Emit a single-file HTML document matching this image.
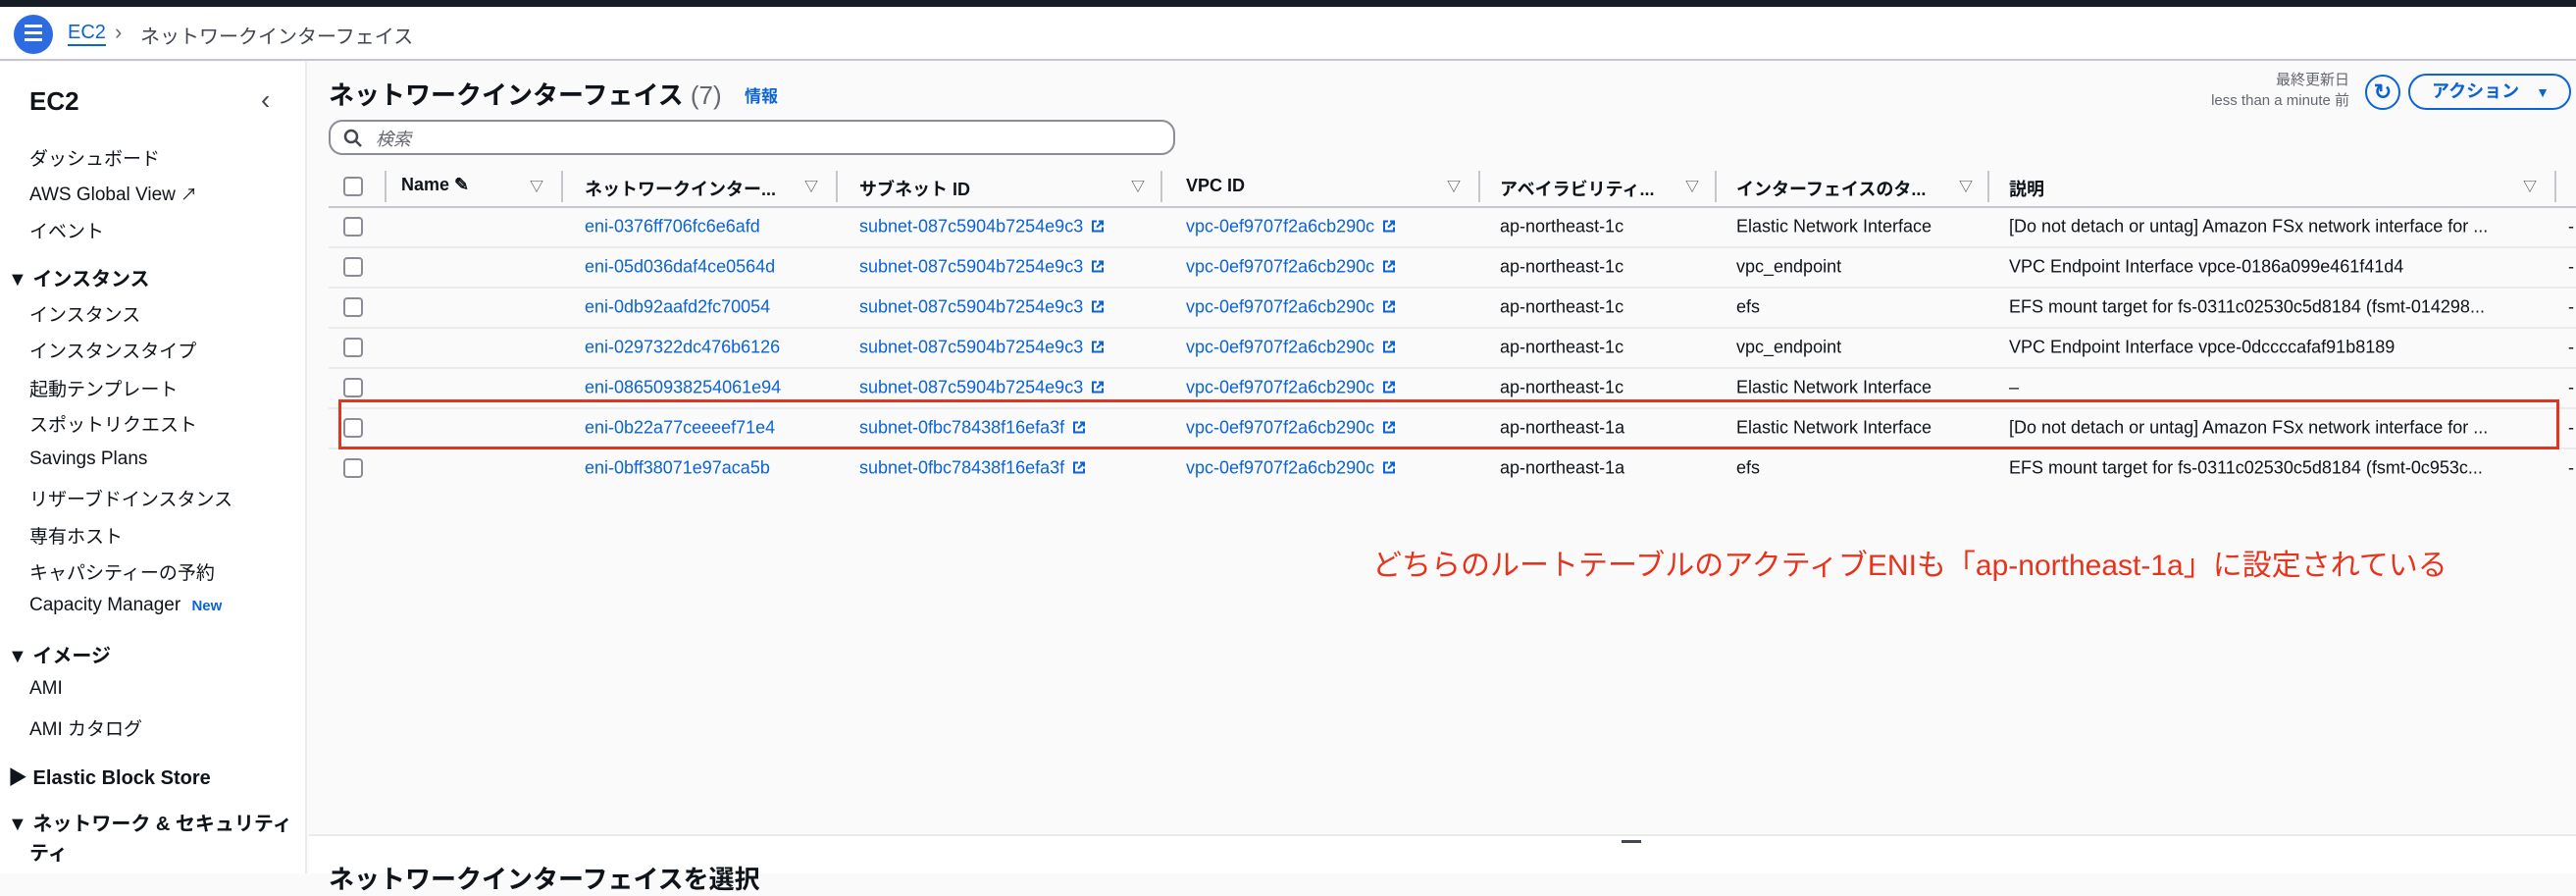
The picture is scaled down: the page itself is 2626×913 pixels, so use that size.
<!DOCTYPE html>
<html><head><meta charset="utf-8"><style>
*{margin:0;padding:0;box-sizing:border-box}
body{width:2626px;height:890px;overflow:hidden;background:#fafafa;font-family:"Liberation Sans","Noto Sans CJK JP",sans-serif;color:#0f141a;position:relative}
.a{position:absolute;white-space:nowrap}
.top{left:0;top:0;width:2626px;height:7px;background:#161d26}
.hdr{left:0;top:7px;width:2626px;height:55px;background:#fff;border-bottom:2px solid #c6c6cd}
.side{left:0;top:63px;width:313px;height:827px;background:#fff;border-right:2px solid #e9ebed}
.s{font-size:19px;left:30px;color:#0f141a}
.sh{font-size:20px;font-weight:bold;left:8px}
.lk{color:#0b63d6}
.t{font-size:18px;transform:translateY(-50%)}
.sep{width:2px;height:32px;background:#c6c6cd;top:174px}
.tri{font-size:14px;top:180px;color:#424650}
.cb{left:350px;width:20px;height:20px;border:2px solid #8c8c94;border-radius:4px;background:#fff}
.row{left:335px;width:2291px;height:2px;background:#e9ebed}
.ext{display:inline-block;width:14px;height:14px;margin-left:8px;vertical-align:-1px}
</style></head><body>
<div class="a top"></div>
<div class="a hdr"></div>
<div class="a" style="left:14px;top:15px;width:40px;height:40px;border-radius:50%;background:#2d6be0"></div>
<div class="a" style="left:25px;top:25px;width:18px;height:3px;background:#fff;box-shadow:0 7px 0 #fff,0 14px 0 #fff"></div>
<div class="a lk" style="left:69px;top:21px;font-size:20px;border-bottom:2px solid #0b63d6;line-height:24px">EC2</div>
<div class="a" style="left:117px;top:20px;font-size:22px;color:#656871">&#x203A;</div>
<div class="a" style="left:143px;top:21px;font-size:20px;color:#424650">ネットワークインターフェイス</div>

<div class="a side"></div>
<div class="a" style="left:30px;top:88px;font-size:26px;font-weight:bold">EC2</div>
<div class="a" style="left:266px;top:86px;font-size:28px;color:#424650">&#x2039;</div>
<div class="a s" style="top:147px">ダッシュボード</div>
<div class="a s" style="top:184px">AWS Global View <span style="font-size:17px">&#x2197;</span></div>
<div class="a s" style="top:221px">イベント</div>
<div class="a sh" style="top:268px">▼ インスタンス</div>
<div class="a s" style="top:306px">インスタンス</div>
<div class="a s" style="top:343px">インスタンスタイプ</div>
<div class="a s" style="top:382px">起動テンプレート</div>
<div class="a s" style="top:418px">スポットリクエスト</div>
<div class="a s" style="top:457px">Savings Plans</div>
<div class="a s" style="top:494px">リザーブドインスタンス</div>
<div class="a s" style="top:532px">専有ホスト</div>
<div class="a s" style="top:569px">キャパシティーの予約</div>
<div class="a s" style="top:606px">Capacity Manager <span class="lk" style="font-size:15px;font-weight:bold;margin-left:6px">New</span></div>
<div class="a sh" style="top:652px">▼ イメージ</div>
<div class="a s" style="top:691px">AMI</div>
<div class="a s" style="top:728px">AMI カタログ</div>
<div class="a sh" style="top:776px">▶ Elastic Block Store</div>
<div class="a sh" style="top:823px">▼ ネットワーク &amp; セキュリティ</div>
<div class="a sh" style="top:853px;left:30px">ティ</div>

<div class="a" style="left:335px;top:77px;font-size:26px;font-weight:bold">ネットワークインターフェイス <span style="font-weight:normal;color:#656871">(7)</span></div>
<div class="a lk" style="left:759px;top:84px;font-size:17px;font-weight:bold">情報</div>
<div class="a" style="right:231px;top:71px;font-size:15px;color:#656871;text-align:right;line-height:21px">最終更新日<br>less than a minute 前</div>
<div class="a" style="left:2411px;top:76px;width:36px;height:36px;border:2px solid #0b63d6;border-radius:50%;color:#0b63d6;font-size:22px;text-align:center;line-height:31px;font-weight:bold">&#x21BB;</div>
<div class="a" style="left:2455px;top:75px;width:166px;height:37px;border:2px solid #0b63d6;border-radius:20px;color:#0b63d6;font-size:18px;font-weight:bold;line-height:33px;padding-left:22px">アクション <span style="margin-left:12px;font-size:14px">▼</span></div>
<div class="a" style="left:335px;top:122px;width:863px;height:36px;border:2px solid #8c8c94;border-radius:14px;background:#fff"></div>
<svg class="a" style="left:350px;top:131px" width="20" height="20"><circle cx="8" cy="8" r="6" fill="none" stroke="#424650" stroke-width="2.5"/><line x1="12.5" y1="12.5" x2="18" y2="18" stroke="#424650" stroke-width="2.5"/></svg>
<div class="a" style="left:383px;top:128px;font-size:18px;color:#656871;font-style:italic">検索</div>

<div class="a cb" style="top:180px"></div>
<div class="a sep" style="left:392px"></div>
<div class="a" style="left:409px;top:178px;font-size:18px;font-weight:bold">Name &#x270E;</div>
<div class="a tri" style="left:540px">▽</div>
<div class="a sep" style="left:572px"></div>
<div class="a" style="left:596px;top:179px;font-size:18px;font-weight:bold">ネットワークインター...</div>
<div class="a tri" style="left:820px">▽</div>
<div class="a sep" style="left:852px"></div>
<div class="a" style="left:876px;top:179px;font-size:18px;font-weight:bold">サブネット ID</div>
<div class="a tri" style="left:1153px">▽</div>
<div class="a sep" style="left:1183px"></div>
<div class="a" style="left:1209px;top:179px;font-size:18px;font-weight:bold">VPC ID</div>
<div class="a tri" style="left:1475px">▽</div>
<div class="a sep" style="left:1507px"></div>
<div class="a" style="left:1529px;top:179px;font-size:18px;font-weight:bold">アベイラビリティ...</div>
<div class="a tri" style="left:1718px">▽</div>
<div class="a sep" style="left:1748px"></div>
<div class="a" style="left:1770px;top:179px;font-size:18px;font-weight:bold">インターフェイスのタ...</div>
<div class="a tri" style="left:1997px">▽</div>
<div class="a sep" style="left:2026px"></div>
<div class="a" style="left:2048px;top:179px;font-size:18px;font-weight:bold">説明</div>
<div class="a tri" style="left:2572px">▽</div>
<div class="a sep" style="left:2604px"></div>
<div class="a" style="left:335px;top:210px;width:2291px;height:2px;background:#c6c6cd"></div>

<div id="rows"></div>
<script>
var d=[
["eni-0376ff706fc6e6afd","subnet-087c5904b7254e9c3","ap-northeast-1c","Elastic Network Interface","[Do not detach or untag] Amazon FSx network interface for ..."],
["eni-05d036daf4ce0564d","subnet-087c5904b7254e9c3","ap-northeast-1c","vpc_endpoint","VPC Endpoint Interface vpce-0186a099e461f41d4"],
["eni-0db92aafd2fc70054","subnet-087c5904b7254e9c3","ap-northeast-1c","efs","EFS mount target for fs-0311c02530c5d8184 (fsmt-014298..."],
["eni-0297322dc476b6126","subnet-087c5904b7254e9c3","ap-northeast-1c","vpc_endpoint","VPC Endpoint Interface vpce-0dccccafaf91b8189"],
["eni-08650938254061e94","subnet-087c5904b7254e9c3","ap-northeast-1c","Elastic Network Interface","–"],
["eni-0b22a77ceeeef71e4","subnet-0fbc78438f16efa3f","ap-northeast-1a","Elastic Network Interface","[Do not detach or untag] Amazon FSx network interface for ..."],
["eni-0bff38071e97aca5b","subnet-0fbc78438f16efa3f","ap-northeast-1a","efs","EFS mount target for fs-0311c02530c5d8184 (fsmt-0c953c..."]];
var ext='<svg class="ext" viewBox="0 0 14 14"><path d="M6 2H2v10h10V8M8 2h4v4M12 2L6 8" fill="none" stroke="#0b63d6" stroke-width="2"/></svg>';
var h='';
d.forEach(function(r,i){var y=231+i*41;
h+='<div class="a cb" style="top:'+(y-10)+'px"></div>';
h+='<div class="a t lk" style="left:596px;top:'+y+'px">'+r[0]+'</div>';
h+='<div class="a t lk" style="left:876px;top:'+y+'px">'+r[1]+ext+'</div>';
h+='<div class="a t lk" style="left:1209px;top:'+y+'px">vpc-0ef9707f2a6cb290c'+ext+'</div>';
h+='<div class="a t" style="left:1529px;top:'+y+'px">'+r[2]+'</div>';
h+='<div class="a t" style="left:1770px;top:'+y+'px">'+r[3]+'</div>';
h+='<div class="a t" style="left:2048px;top:'+y+'px">'+r[4]+'</div>';
h+='<div class="a t" style="left:2618px;top:'+y+'px">-</div>';
if(i<6)h+='<div class="a row" style="top:'+(y+20)+'px"></div>';
});
document.getElementById('rows').innerHTML=h;
</script>
<div class="a" style="left:345px;top:407px;width:2264px;height:51px;border:3px solid #e2351f"></div>
<div class="a" style="left:1399px;top:551px;font-size:30px;color:#e8331c">どちらのルートテーブルのアクティブENIも「ap-northeast-1a」に設定されている</div>

<div class="a" style="left:315px;top:850px;width:2311px;height:40px;background:#fff;border-top:2px solid #e9ebed"></div>
<div class="a" style="left:1653px;top:856px;width:20px;height:3px;background:#424650"></div>
<div class="a" style="left:335px;top:876px;font-size:26px;font-weight:bold">ネットワークインターフェイスを選択</div>
</body></html>
